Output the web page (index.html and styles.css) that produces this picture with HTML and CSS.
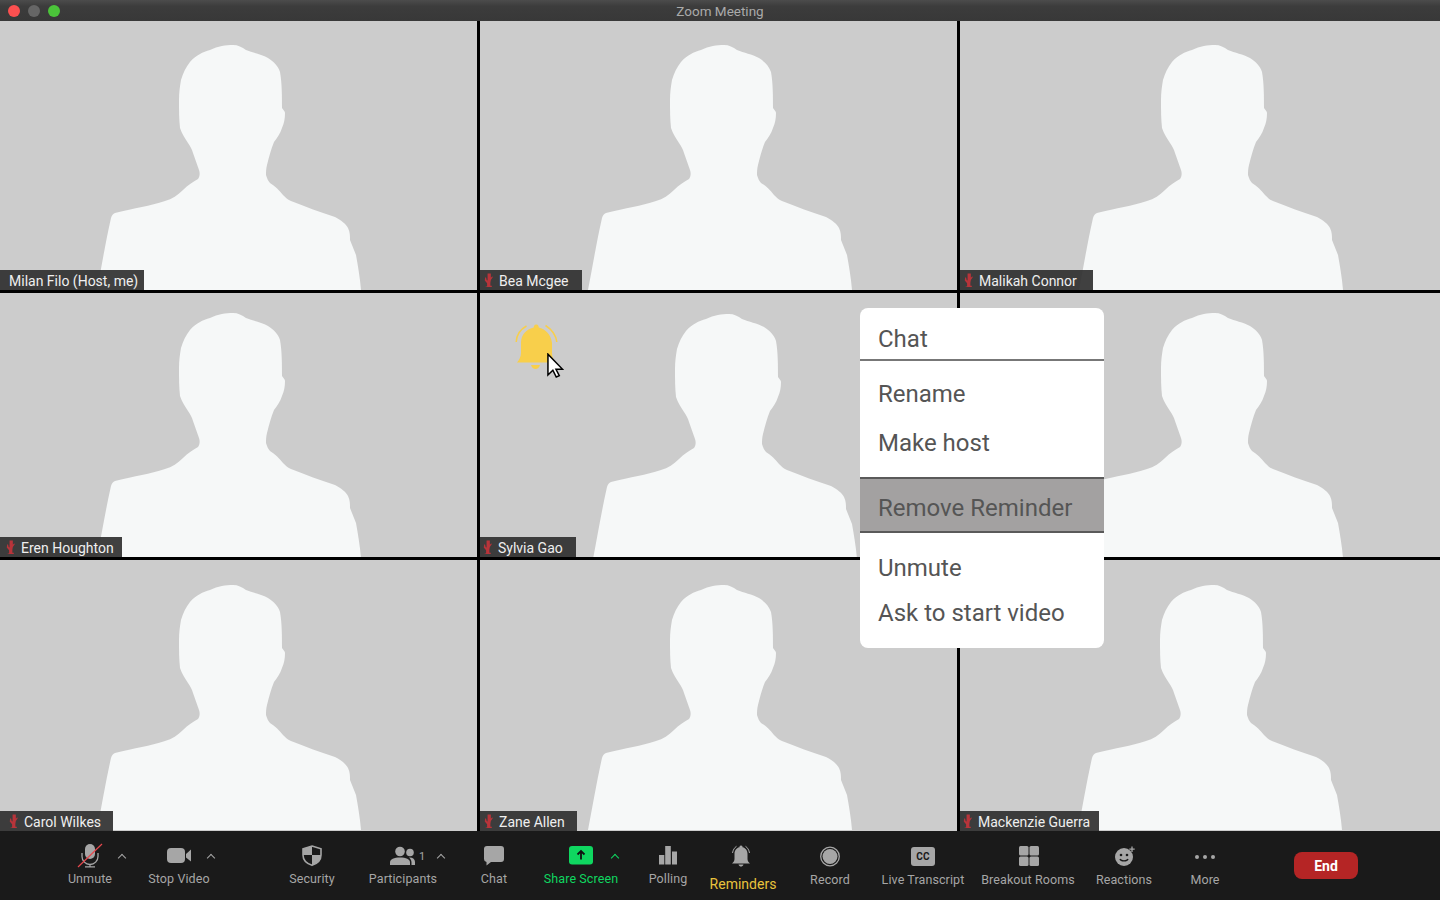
FILE: index.html
```html
<!DOCTYPE html>
<html>
<head>
    <meta charset="utf-8">
    <title>Zoom Meeting</title>
    <link rel="stylesheet" href="styles.css">
</head>
<body>
    <svg class="defs" width="0" height="0">
        <defs>
            <path id="person" d="M97 269C102 243 106 219 111 197C112 194 113 193 115 192C135 187 150 185 165 180C172 178 178 174 183 169C188 164 193 161 198 158C200 155 200 152 199 149C197 143 195 138 193 132C192 128 190 125 188 122C185 117 182 113 180 107C179 98 179 89 179 79C179 71 180 65 181 59C183 52 186 46 190 41C196 34 203 31 210 29C218 25 226 24 233 24C238 24 242 26 246 29C253 32 261 33 268 37C274 41 278 45 280 51C282 62 282 76 282 87C283 89 285 90 285 92C285 98 284 102 282 107C280 113 277 117 274 121C271 128 269 136 267 144C266 148 266 151 266 154C267 157 268 160 270 162C275 165 279 169 283 174C286 177 288 179 291 180C306 186 320 191 335 196C341 199 346 203 348 207C350 211 350 215 350 219C352 224 354 229 356 234C358 245 360 257 361 269Z"/>
            <path id="mini-mic" d="M3.500 0.500h3.500v4.500l1.500-1.500.5 1-2 3-.5 2.500v3.500h1.500v1.500H1.500V14.500H3v-3.500L0.500 8 1 4.500l1 .5.500 2.500 1 .500Z"/>
        </defs>
    </svg>

    <div class="titlebar">
        <div class="lights">
            <span class="light red"></span>
            <span class="light grey"></span>
            <span class="light green"></span>
        </div>
        <span class="title">Zoom Meeting</span>
    </div>

    <div class="gallery">
        <div class="tile">
            <svg class="person"><use href="#person"/></svg>
            <div class="tag tag-milan"><span>Milan Filo (Host, me)</span></div>
        </div>
        <div class="tile">
            <svg class="person"><use href="#person" x="11"/></svg>
            <div class="tag tag-bea"><svg class="tag-mic" viewBox="0 0 9 16"><use href="#mini-mic"/></svg><span>Bea Mcgee</span></div>
        </div>
        <div class="tile">
            <svg class="person"><use href="#person" x="22"/></svg>
            <div class="tag tag-malikah"><svg class="tag-mic" viewBox="0 0 9 16"><use href="#mini-mic"/></svg><span>Malikah Connor</span></div>
        </div>

        <div class="tile">
            <svg class="person"><use href="#person" y="-4"/></svg>
            <div class="tag tag-eren"><svg class="tag-mic" viewBox="0 0 9 16"><use href="#mini-mic"/></svg><span>Eren Houghton</span></div>
        </div>
        <div class="tile">
            <svg class="person"><use href="#person" x="16" y="-3"/></svg>
            <div class="tag tag-sylvia"><svg class="tag-mic" viewBox="0 0 9 16"><use href="#mini-mic"/></svg><span>Sylvia Gao</span></div>
        </div>
        <div class="tile">
            <svg class="person"><use href="#person" x="22" y="-4"/></svg>
        </div>

        <div class="tile">
            <svg class="person"><use href="#person" y="1"/></svg>
            <div class="tag tag-carol"><svg class="tag-mic" viewBox="0 0 9 16"><use href="#mini-mic"/></svg><span>Carol Wilkes</span></div>
        </div>
        <div class="tile">
            <svg class="person"><use href="#person" x="11" y="1"/></svg>
            <div class="tag tag-zane"><svg class="tag-mic" viewBox="0 0 9 16"><use href="#mini-mic"/></svg><span>Zane Allen</span></div>
        </div>
        <div class="tile">
            <svg class="person"><use href="#person" x="21" y="1"/></svg>
            <div class="tag tag-mack"><svg class="tag-mic" viewBox="0 0 9 16"><use href="#mini-mic"/></svg><span>Mackenzie Guerra</span></div>
        </div>
    </div>

    <!-- bell and pointer float over the sylvia tile -->
    <svg class="big-bell" viewBox="0 0 44 48">
        <path class="bell-arc" d="M1.200 19C1.500 12 6 6 11.500 3"/>
        <path class="bell-arc" d="M30.500 2.500C36 6 41 12 41.800 19"/>
        <path class="bell-fill" d="M19 3a2.500 2.500 0 0 1 4.500 0l.3 1.500C30 6 36 11 37 20V30C37 34 38.500 37 40 39.500H2C4 37 6 34 6 30V20C6 11 12 6 18.700 4.500Z"/>
        <path class="bell-fill" d="M16 42h9c-.8 2.600-2.400 4-4.500 4S16.800 44.600 16 42Z"/>
    </svg>
    <svg class="pointer" viewBox="0 0 18 26">
        <path d="M1 1V23L6.200 18L9.800 25.200L13 23.800L9.500 17H16.500Z"/>
    </svg>

    <div class="menu">
        <div class="menu-sec sec-chat"><span>Chat</span></div>
        <div class="menu-sec sec-host">
            <span class="menu-item item-rename">Rename</span>
            <span class="menu-item item-host">Make host</span>
        </div>
        <div class="menu-sec sec-remind"><span>Remove Reminder</span></div>
        <div class="menu-sec sec-media">
            <span class="menu-item item-unmute">Unmute</span>
            <span class="menu-item item-ask">Ask to start video</span>
        </div>
    </div>

    <div class="toolbar">
        <div class="tool tool-unmute">
            <svg class="ico" viewBox="0 0 28 24">
                <rect class="fill" x="9" y="0" width="10" height="15" rx="5"/>
                <path class="line" d="M6 9v3.500a8 8 0 0 0 16 0V9M14 20.500v2.500M9 22.800h10"/>
                <path class="slash" d="M2 23L26 0"/>
            </svg>
            <span class="tool-label">Unmute</span>
            <i class="caret"></i>
        </div>
        <div class="tool tool-video">
            <svg class="ico" viewBox="0 0 28 24">
                <rect class="fill" x="2" y="4" width="18" height="15" rx="4"/>
                <path class="fill" d="M21 10L26 5.500V17.500L21 13.500Z"/>
            </svg>
            <span class="tool-label">Stop Video</span>
            <i class="caret"></i>
        </div>
        <div class="tool tool-security">
            <svg class="ico" viewBox="0 0 28 24">
                <path class="shield" d="M14 2L23 4.800V11C23 16 19.500 19.500 14 21.300C8.500 19.500 5 16 5 11V4.800Z"/>
                <path class="fill" d="M14 2L5 4.800V11H14ZM14 11V21.300C19.500 19.500 23 16 23 11Z"/>
            </svg>
            <span class="tool-label">Security</span>
        </div>
        <div class="tool tool-people">
            <svg class="ico" viewBox="0 0 28 24">
                <circle class="fill" cx="11" cy="7.500" r="4.800"/>
                <circle class="fill" cx="21" cy="8.500" r="3.800"/>
                <path class="fill" d="M1 21V18.500C1 15 5 13.500 11 13.500S21 15 21 18.500V21Z"/>
                <path class="fill" d="M22.500 21V18.500C22.500 16.500 21.500 14.800 20 13.600C24 13.400 26 15.500 26 18V21Z"/>
            </svg>
            <span class="tool-label">Participants</span>
            <span class="count">1</span>
            <i class="caret caret-far"></i>
        </div>
        <div class="tool tool-chat">
            <svg class="ico" viewBox="0 0 28 24">
                <path class="fill" d="M7 2H21A3 3 0 0 1 24 5V15A3 3 0 0 1 21 18H11L6.500 21.500V18A3 3 0 0 1 4 15V5A3 3 0 0 1 7 2Z"/>
            </svg>
            <span class="tool-label">Chat</span>
        </div>
        <div class="tool tool-share">
            <svg class="ico" viewBox="0 0 28 24">
                <rect class="share-box" x="2" y="2" width="24" height="18.500" rx="3"/>
                <path class="share-arrow" d="M14 15.500V7M10.500 10.500L14 7L17.500 10.500"/>
            </svg>
            <span class="tool-label">Share Screen</span>
            <i class="caret caret-green"></i>
        </div>
        <div class="tool tool-polling">
            <svg class="ico" viewBox="0 0 28 24">
                <rect class="fill" x="5" y="11" width="5.300" height="9.500"/>
                <rect class="fill" x="11.200" y="2" width="5.600" height="18.500"/>
                <rect class="fill" x="18" y="7.500" width="5" height="13"/>
            </svg>
            <span class="tool-label">Polling</span>
        </div>
        <div class="tool tool-remind">
            <svg class="ico ico-bell" viewBox="0 0 28 24">
                <path class="line thin" d="M5.500 9C6 6 7.500 3.500 9.500 2.300M18.500 2.300C20.500 3.500 22 6 22.500 9"/>
                <path class="fill" d="M14 1.500a1.500 1.500 0 0 1 1.500 1.800C19 4 20.500 7 20.500 10V15C20.500 17 21.500 18 23 19.500H5C6.500 18 7.500 17 7.500 15V10C7.500 7 9 4 12.500 3.300A1.500 1.500 0 0 1 14 1.500ZM11.500 20.500H16.500C16 22 15 22.500 14 22.500S12 22 11.500 20.500Z"/>
            </svg>
            <span class="tool-label label-yellow">Reminders</span>
        </div>
        <div class="tool tool-record">
            <svg class="ico" viewBox="0 0 28 24">
                <circle class="line" cx="14" cy="12.500" r="9.300"/>
                <circle class="fill" cx="14" cy="12.500" r="7.500"/>
            </svg>
            <span class="tool-label label-low">Record</span>
        </div>
        <div class="tool tool-live">
            <div class="cc"><span>CC</span></div>
            <span class="tool-label label-low">Live Transcript</span>
        </div>
        <div class="tool tool-rooms">
            <svg class="ico" viewBox="0 0 28 24">
                <rect class="fill" x="5" y="2" width="9.500" height="9.500" rx="1.500"/>
                <rect class="fill" x="15.500" y="2" width="9.500" height="9.500" rx="1.500"/>
                <rect class="fill" x="5" y="12.500" width="9.500" height="9.500" rx="1.500"/>
                <rect class="fill" x="15.500" y="12.500" width="9.500" height="9.500" rx="1.500"/>
            </svg>
            <span class="tool-label label-low">Breakout Rooms</span>
        </div>
        <div class="tool tool-react">
            <svg class="ico" viewBox="0 0 28 24">
                <circle class="fill" cx="14" cy="13" r="9"/>
                <circle class="face" cx="11" cy="11" r="1.300"/>
                <circle class="face" cx="17" cy="11" r="1.300"/>
                <path class="smile" d="M10 15C11 17.500 17 17.500 18 15"/>
                <path class="line" d="M22 2.500V8M19.300 5.200H24.700"/>
            </svg>
            <span class="tool-label label-low">Reactions</span>
        </div>
        <div class="tool tool-more">
            <svg class="ico" viewBox="0 0 28 24">
                <circle class="fill" cx="6" cy="13" r="2"/>
                <circle class="fill" cx="14" cy="13" r="2"/>
                <circle class="fill" cx="22" cy="13" r="2"/>
            </svg>
            <span class="tool-label label-low">More</span>
        </div>
        <button class="end">End</button>
    </div>
</body>
</html>
```
FILE: styles.css
```css
*{
    margin: 0;
    box-sizing: border-box;
}
body{
    width: 1440px;
    height: 900px;
    position: relative;
    overflow: hidden;
    background-color: black;
    font-family: Roboto, "Liberation Sans", sans-serif;
}
.defs{
    position: absolute;
}

/* title bar */
.titlebar{
    height: 21px;
    display: flex;
    align-items: center;
    justify-content: center;
    position: relative;
    background: linear-gradient(#4c4c4c, #3c3c3c 30%, #383838);
}
.lights{
    position: absolute;
    left: 8px;
    top: 5px;
    display: flex;
    gap: 8px;
}
.light{
    width: 12px;
    height: 12px;
    border-radius: 50%;
}
.red{ background-color: #fc5050; }
.grey{ background-color: #666666; }
.green{ background-color: #4bc43a; }
.title{
    color: #aaaaaa;
    font-size: 13.5px;
    padding-top: 1px;
}

/* video tiles */
.gallery{
    height: 810px;
    display: grid;
    grid-template-columns: 477px 477px 480px;
    grid-template-rows: 269px 264px 271px;
    column-gap: 3px;
    row-gap: 3px;
}
.tile{
    position: relative;
    overflow: hidden;
    background-color: #cccccc;
}
.person{
    width: 100%;
    height: 100%;
    display: block;
    fill: #f6f8f8;
}
.tag{
    position: absolute;
    left: 0;
    bottom: 0;
    height: 20px;
    display: flex;
    align-items: center;
    color: #efefef;
    font-size: 14px;
    background-color: rgba(48, 48, 48, 0.92);
}
.tag span{
    padding-top: 2px;
}
.tag-mic{
    width: 9px;
    height: 15px;
    margin-right: 6px;
    fill: #b8343a;
}
.tag-milan{ padding: 0 6px 0 9px; }
.tag-bea{ padding: 0 13px 0 4px; }
.tag-malikah{ padding: 0 16px 0 4px; }
.tag-eren{ padding: 0 8px 0 6px; }
.tag-sylvia{ padding: 0 13px 0 3px; }
.tag-carol{ padding: 0 12px 0 9px; }
.tag-zane{ padding: 0 12px 0 4px; }
.tag-mack{ padding: 0 9px 0 3px; }

/* overlays on the middle tile */
.big-bell{
    position: absolute;
    left: 515px;
    top: 323px;
    width: 44px;
    height: 48px;
    overflow: visible;
}
.bell-arc{
    fill: none;
    stroke: #f8cf4b;
    stroke-width: 1.5;
}
.bell-fill{
    fill: #f8cf4b;
}
.pointer{
    position: absolute;
    left: 547px;
    top: 353px;
    width: 17px;
    height: 25px;
    fill: white;
    stroke: black;
    stroke-width: 1.6;
}

/* participant menu */
.menu{
    position: absolute;
    left: 860px;
    top: 308px;
    width: 244px;
    height: 340px;
    border-radius: 8px;
    overflow: hidden;
    background-color: white;
    color: #555555;
    font-size: 24px;
    line-height: 28px;
    padding-bottom: 1px;
}
.menu-sec{
    display: flex;
    flex-direction: column;
    padding-left: 18px;
}
.sec-chat{
    height: 53px;
    padding-top: 17px;
    border-bottom: 2px solid #777777;
}
.sec-host{
    height: 116px;
    padding-top: 19px;
    gap: 21px;
}
.sec-remind{
    height: 56px;
    padding-top: 15px;
    background-color: #a3a1a1;
    border-top: 2px solid #5a5a5a;
    border-bottom: 2px solid #5a5a5a;
}
.sec-media{
    padding-top: 21px;
    gap: 17px;
}

/* bottom toolbar */
.toolbar{
    position: absolute;
    left: 0;
    bottom: 0;
    width: 100%;
    height: 69px;
    display: flex;
    align-items: flex-start;
    padding-left: 55px;
    background-color: #1a1a1a;
}
.tool{
    position: relative;
    width: 70px;
    height: 69px;
    padding-top: 13px;
    display: flex;
    flex-direction: column;
    align-items: center;
    flex-shrink: 0;
}
.ico{
    width: 28px;
    height: 24px;
    flex-shrink: 0;
    overflow: visible;
}
.ico-bell{
    margin-right: 4px;
}
.fill{ fill: #a6a6a6; }
.line{
    fill: none;
    stroke: #a6a6a6;
    stroke-width: 1.3;
}
.thin{ stroke-width: 1; }
.slash{
    stroke: #e5484d;
    stroke-width: 1.2;
}
.shield{
    fill: #1a1a1a;
    stroke: #a6a6a6;
    stroke-width: 1.6;
}
.share-box{ fill: #0fd760; }
.share-arrow{
    fill: none;
    stroke: #111111;
    stroke-width: 1.8;
}
.face{ fill: #1a1a1a; }
.smile{
    fill: none;
    stroke: #1a1a1a;
    stroke-width: 1.4;
}
.tool-label{
    color: #a6a6a6;
    font-size: 12.5px;
    letter-spacing: 0.1px;
    line-height: 14px;
    margin-top: 4px;
    white-space: nowrap;
}
.label-low{ margin-top: 5px; }
.label-yellow{
    color: #e8c33c;
    font-size: 14px;
    letter-spacing: 0;
    line-height: 16px;
    margin-top: 8px;
}
.tool-share .tool-label{ color: #0fd760; }
.caret{
    position: absolute;
    left: calc(50% + 29px);
    top: 24px;
    width: 6px;
    height: 6px;
    border-left: 1.5px solid #a6a6a6;
    border-top: 1.5px solid #a6a6a6;
    transform: rotate(45deg);
}
.caret-far{ left: calc(50% + 35px); }
.caret-green{
    left: calc(50% + 31px);
    border-color: #0fd760;
}
.count{
    position: absolute;
    left: calc(50% + 16px);
    top: 19px;
    color: #a6a6a6;
    font-size: 11px;
}
.cc{
    width: 24px;
    height: 19px;
    margin: 3px 2px 2px;
    border-radius: 3px;
    background-color: #a6a6a6;
    color: #1a1a1a;
    font-size: 10px;
    font-weight: bold;
    letter-spacing: 0.3px;
    display: flex;
    align-items: center;
    justify-content: center;
}
.tool-video{ margin-left: 19px; }
.tool-security{ margin-left: 63px; }
.tool-people{ margin-left: 21px; }
.tool-chat{ margin-left: 21px; }
.tool-share{ margin-left: 17px; }
.tool-polling{ margin-left: 17px; }
.tool-remind{ margin-left: 5px; }
.tool-record{ margin-left: 17px; }
.tool-live{ margin-left: 23px; }
.tool-rooms{ margin-left: 35px; }
.tool-react{ margin-left: 26px; }
.tool-more{ margin-left: 11px; }
.end{
    width: 64px;
    height: 27px;
    margin-left: 54px;
    margin-top: 21px;
    border: none;
    border-radius: 8px;
    background-color: #b52525;
    color: white;
    font-family: Roboto, "Liberation Sans", sans-serif;
    font-size: 14px;
    font-weight: bold;
}
```
